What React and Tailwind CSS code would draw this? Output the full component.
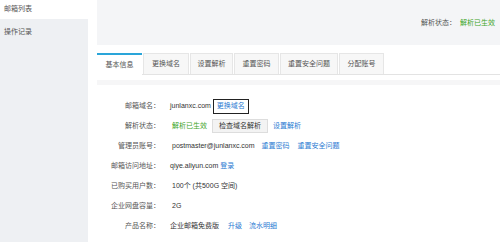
import React from 'react'

const FONT = { fontFamily: '"Liberation Sans", "Noto Sans CJK SC", sans-serif' }

const TABS = [
  { label: '基本信息', w: 'w-[45px]', active: true },
  { label: '更换域名', w: 'w-[46px]' },
  { label: '设置解析', w: 'w-[43px]' },
  { label: '重置密码', w: 'w-[45px]' },
  { label: '重置安全问题', w: 'w-[58px]' },
  { label: '分配账号', w: 'w-[45px]' },
]

function Row({ label, children }) {
  return (
    <div className="flex items-center h-[20px]">
      <div className="w-[63px] text-right text-[#555] shrink-0">{label}</div>
      <div className="ml-[10px] flex items-center text-[#333]">{children}</div>
    </div>
  )
}

const Link = ({ children, className = '' }) => (
  <span className={`text-[#2b7bd2] ${className}`}>{children}</span>
)

export default function App() {
  return (
    <div className="flex w-[500px] h-[242px] overflow-hidden bg-white text-[7px] leading-[10px]" style={FONT}>
      {/* sidebar */}
      <div className="w-[88px] shrink-0 bg-[#eef0f3] flex flex-col">
        <div className="h-[19px] bg-white pl-[4px] pt-[4px] text-[#555]">邮箱列表</div>
        <div className="pl-[4px] mt-[8px] text-[#555]">操作记录</div>
      </div>

      {/* main */}
      <div className="ml-[9px] flex-1 flex flex-col">
        <div className="h-[45px] bg-[#f4f5f7] flex items-center justify-end pr-[5px] pt-[1px]">
          <span className="text-[#555]">解析状态：</span>
          <span className="ml-[4px] text-[#3fa52b]">解析已生效</span>
        </div>

        <div className="mt-[8px] h-[22px] flex gap-[1px] border-b border-[#e3e3e3]">
          {TABS.map(t => (
            <div
              key={t.label}
              className={`${t.w} flex items-center justify-center text-[#555] ${
                t.active
                  ? 'bg-white border-t-2 border-[#2aa5d9] -mb-[1px]'
                  : 'bg-[#f7f7f7] border border-b-0 border-[#e6e6e6]'
              }`}
            >
              {t.label}
            </div>
          ))}
        </div>

        <div className="mt-[5px] h-[5px] bg-[#f6f6f7]" />

        <div className="pt-[11px] flex flex-col">
          <Row label="邮箱域名：">
            <span>junlanxc.com</span>
            <span className="ml-[2px] h-[15px] px-[3px] flex items-center border-[1.5px] border-[#222] bg-white">
              <Link>更换域名</Link>
            </span>
          </Row>
          <Row label="解析状态：">
            <span className="ml-[2px] text-[#3fa52b]">解析已生效</span>
            <span className="ml-[5px] h-[14px] px-[6px] flex items-center bg-[#f3f3f3] border border-[#ddd] text-[#333]">
              检查域名解析
            </span>
            <Link className="ml-[5px]">设置解析</Link>
          </Row>
          <Row label="管理员账号：">
            <span className="ml-[2px]">postmaster@junlanxc.com</span>
            <Link className="ml-[7px]">重置密码</Link>
            <Link className="ml-[8px]">重置安全问题</Link>
          </Row>
          <Row label="邮箱访问地址：">
            <span>qiye.aliyun.com</span>
            <Link className="ml-[2px]">登录</Link>
          </Row>
          <Row label="已购买用户数：">
            <span className="ml-[2px]">100个 (共500G 空间)</span>
          </Row>
          <Row label="企业网盘容量：">
            <span className="ml-[2px]">2G</span>
          </Row>
          <Row label="产品名称：">
            <span>企业邮箱免费版</span>
            <Link className="ml-[9px]">升级</Link>
            <Link className="ml-[7px]">流水明细</Link>
          </Row>
        </div>
      </div>
    </div>
  )
}
